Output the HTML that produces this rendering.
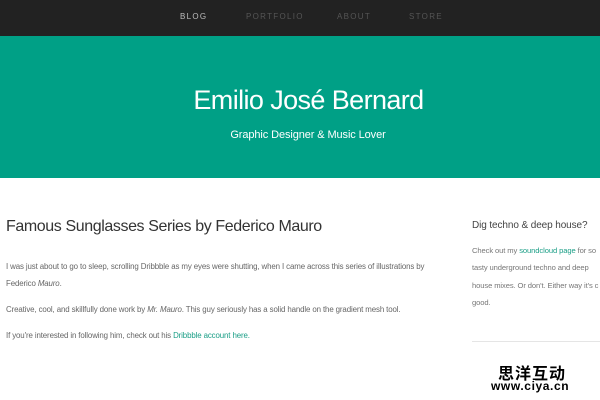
<!DOCTYPE html>
<html><head><meta charset="utf-8"><style>
*{margin:0;padding:0;box-sizing:border-box}
body{width:600px;height:400px;overflow:hidden;background:#fff;font-family:"Liberation Sans",sans-serif;position:relative}
.nav{height:36px;background:#222;position:relative}
.nav span{position:absolute;top:12px;font-size:8px;letter-spacing:1.3px;color:#555}
.hero{height:142px;background:#00a086;color:#fff;text-align:center}
.hero h1{position:absolute;left:0;right:0;font-weight:normal;font-size:27px;letter-spacing:-0.6px;padding-left:17px}
.hero p{position:absolute;left:0;right:0;font-size:11px;letter-spacing:-0.1px;padding-left:16px}
h2{position:absolute;left:6px;top:218px;font-weight:normal;font-size:16px;color:#333;letter-spacing:-0.4px}
.p{position:absolute;left:6px;font-size:7.9px;color:#666;letter-spacing:-0.12px;white-space:nowrap}
a{color:#1a9e86;text-decoration:none}
.s{position:absolute;left:472px;font-size:7.6px;color:#777;white-space:nowrap;letter-spacing:-0.1px}
</style></head><body>
<div class="nav">
<span style="left:180px;color:#bbb">BLOG</span>
<span style="left:246px">PORTFOLIO</span>
<span style="left:337px">ABOUT</span>
<span style="left:409px">STORE</span>
</div>
<div class="hero" style="position:absolute;top:36px;left:0;width:600px"><h1 style="top:49px">Emilio José Bernard</h1><p style="top:93px">Graphic Designer &amp; Music Lover</p></div>
<h2>Famous Sunglasses Series by Federico Mauro</h2>
<div class="p" style="top:262px">I was just about to go to sleep, scrolling Dribbble as my eyes were shutting, when I came across this series of illustrations by</div>
<div class="p" style="top:279px">Federico <i>Mauro</i>.</div>
<div class="p" style="top:305px">Creative, cool, and skillfully done work by <i>Mr. Mauro</i>. This guy seriously has a solid handle on the gradient mesh tool.</div>
<div class="p" style="top:331px">If you're interested in following him, check out his <a>Dribbble account here.</a></div>
<div class="s" style="top:220px;font-size:10px;color:#444">Dig techno &amp; deep house?</div>
<div class="s" style="top:246px">Check out my <a>soundcloud page</a> for so</div>
<div class="s" style="top:263px">tasty underground techno and deep</div>
<div class="s" style="top:281px">house mixes. Or don't. Either way it's c</div>
<div class="s" style="top:298px">good.</div>
<div style="position:absolute;left:472px;top:341px;width:128px;height:1px;background:#e5e5e5"></div>
<div style="position:absolute;left:498px;top:360px;font-family:'Noto Sans CJK SC',sans-serif;font-weight:bold;font-size:16px;color:#000;letter-spacing:1px;text-shadow:1px 1px #fff,-1px -1px #fff,1px -1px #fff,-1px 1px #fff">思洋互动</div>
<div style="position:absolute;left:491px;top:379px;font-weight:bold;font-size:12px;letter-spacing:0.6px;color:#000;text-shadow:1px 1px #fff,-1px -1px #fff,1px -1px #fff,-1px 1px #fff">www.ciya.cn</div>
</body></html>
